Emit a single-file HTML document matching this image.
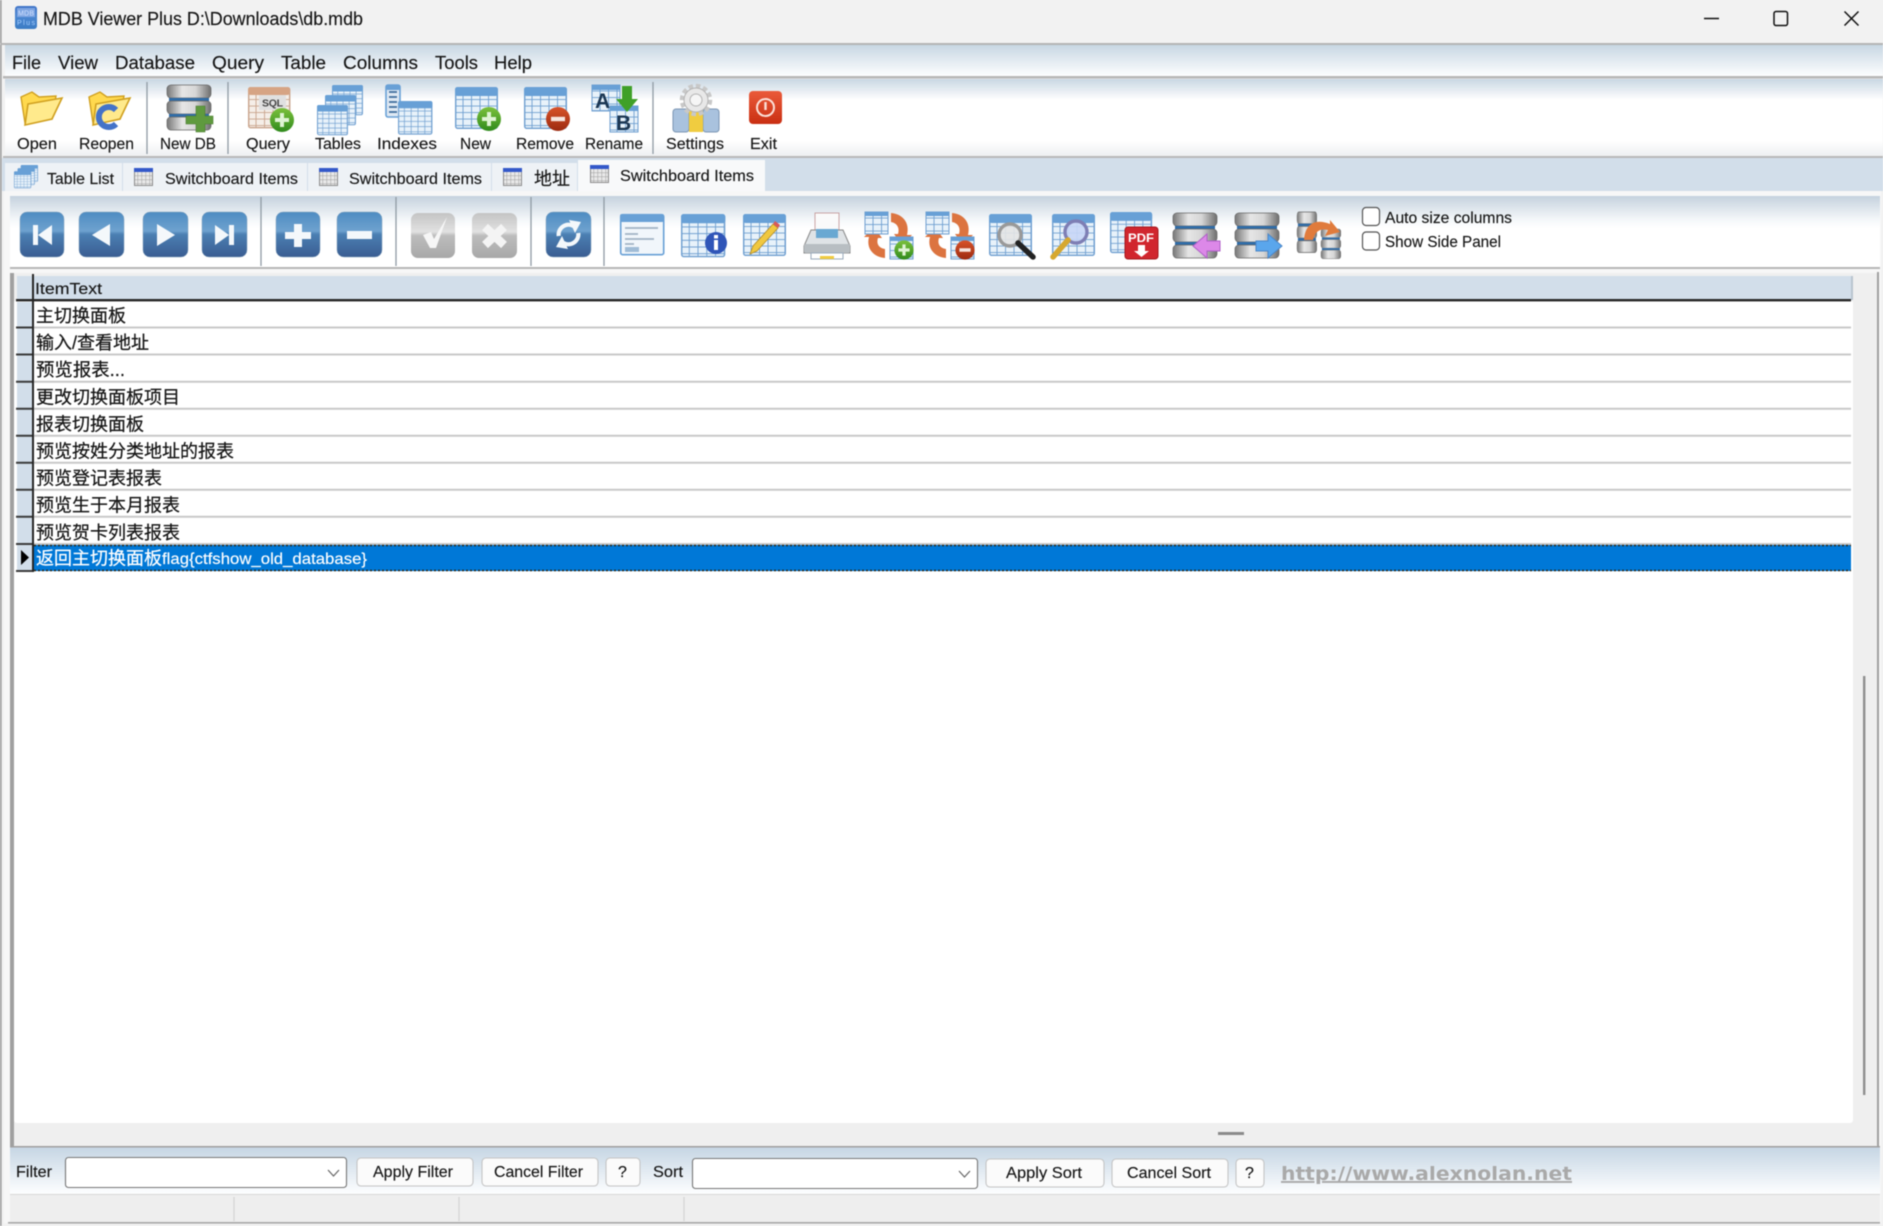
<!DOCTYPE html>
<html><head><meta charset="utf-8"><title>MDB Viewer Plus</title>
<style>
html,body{margin:0;padding:0;background:#f2f2f2;width:1883px;height:1226px;overflow:hidden}
svg{display:block;filter:blur(.45px)}
text{font-family:"Liberation Sans","Noto Sans CJK SC",sans-serif;fill:#161616}
.m{font-size:18px;stroke:#161616;stroke-width:.15px}.t{font-size:16px;stroke:#161616;stroke-width:.15px}.r{font-size:18px;stroke:#161616;stroke-width:.22px}
.w{fill:#fff;stroke:#fff}
</style></head><body>
<svg width="1883" height="1226" viewBox="0 0 1883 1226" xmlns="http://www.w3.org/2000/svg">
<defs>
<linearGradient id="gMenu" x1="0" y1="0" x2="0" y2="1"><stop offset="0" stop-color="#c8d7e3"/><stop offset="1" stop-color="#fdfeff"/></linearGradient>
<linearGradient id="gTool" x1="0" y1="0" x2="0" y2="1"><stop offset="0" stop-color="#c9d7e3"/><stop offset=".27" stop-color="#ffffff"/><stop offset=".8" stop-color="#ffffff"/><stop offset="1" stop-color="#eef0f2"/></linearGradient>
<linearGradient id="gNav" x1="0" y1="0" x2="0" y2="1"><stop offset="0" stop-color="#c5d2de"/><stop offset=".35" stop-color="#f6f9fb"/><stop offset=".45" stop-color="#ffffff"/><stop offset="1" stop-color="#ffffff"/></linearGradient>
<linearGradient id="gBtn" x1="0" y1="0" x2="0" y2="1"><stop offset="0" stop-color="#4f8cc2"/><stop offset=".42" stop-color="#6ea2cf"/><stop offset=".5" stop-color="#4b7fb2"/><stop offset="1" stop-color="#3a5d92"/></linearGradient>
<linearGradient id="gGray" x1="0" y1="0" x2="0" y2="1"><stop offset="0" stop-color="#c4c4c4"/><stop offset=".42" stop-color="#e2e2e2"/><stop offset=".5" stop-color="#bdbdbd"/><stop offset="1" stop-color="#a8a8a8"/></linearGradient>
<linearGradient id="gCyl" x1="0" y1="0" x2="1" y2="0"><stop offset="0" stop-color="#777"/><stop offset=".35" stop-color="#e6e6e6"/><stop offset=".65" stop-color="#d6d6d6"/><stop offset="1" stop-color="#6e6e6e"/></linearGradient>
<linearGradient id="gGreen" x1="0" y1="0" x2="0" y2="1"><stop offset="0" stop-color="#7cc13c"/><stop offset="1" stop-color="#2f8a1c"/></linearGradient>
<linearGradient id="gRed" x1="0" y1="0" x2="0" y2="1"><stop offset="0" stop-color="#d8532a"/><stop offset="1" stop-color="#9c2a10"/></linearGradient>
<linearGradient id="gExit" x1="0" y1="0" x2="0" y2="1"><stop offset="0" stop-color="#ea5a3a"/><stop offset="1" stop-color="#c92f12"/></linearGradient>
<linearGradient id="gFilter" x1="0" y1="0" x2="0" y2="1"><stop offset="0" stop-color="#c6d6e4"/><stop offset="1" stop-color="#fdfeff"/></linearGradient>
<linearGradient id="gIcon" x1="0" y1="0" x2="0" y2="1"><stop offset="0" stop-color="#3f74c8"/><stop offset=".5" stop-color="#4a86d0"/><stop offset="1" stop-color="#3b7cc4"/></linearGradient>
<pattern id="cells" width="8.5" height="6.5" patternUnits="userSpaceOnUse"><rect width="8.5" height="6.5" fill="#e8f2fa"/><path d="M8.5 0V6.5M0 6.5H8.5" stroke="#6f9fd0" stroke-width="1.8"/></pattern>
<pattern id="cellsT" width="8.5" height="6.5" patternUnits="userSpaceOnUse"><rect width="8.5" height="6.5" fill="#f5eee8"/><path d="M8.5 0V6.5M0 6.5H8.5" stroke="#c9a48c" stroke-width="1.8"/></pattern>
<pattern id="cellsG" width="4" height="4" patternUnits="userSpaceOnUse"><rect width="4" height="4" fill="#e8e8e8"/><path d="M4 0V4M0 4H4" stroke="#a0a0a0" stroke-width="1"/></pattern>
<g id="tbl"><rect x=".7" y=".7" width="41.6" height="40.6" rx="2" fill="url(#cells)" stroke="#6f9fd0" stroke-width="1.4"/><rect x="0" y="0" width="43" height="9" rx="2.5" fill="#68a0d6"/></g>
<g id="tab"><rect x=".5" y=".5" width="18" height="17" fill="url(#cellsG)" stroke="#8d8d8d"/><rect x="0" y="0" width="19" height="4" fill="#3358c9"/></g>
<g id="plusG"><circle r="12" fill="url(#gGreen)"/><path d="M-7 0H7M0-7V7" stroke="#dff3d4" stroke-width="4"/></g>
<g id="minusR"><circle r="12" fill="url(#gRed)"/><path d="M-7 0H7" stroke="#f6e6e0" stroke-width="4.4"/></g>
<g id="cyl"><rect x="0" y="0" width="44" height="13" rx="4" fill="url(#gCyl)" stroke="#666" stroke-width=".7"/><rect x="2" y="13" width="40" height="3" fill="#2f6ca8"/><rect x="0" y="16" width="44" height="13" rx="4" fill="url(#gCyl)" stroke="#666" stroke-width=".7"/><rect x="2" y="29" width="40" height="3" fill="#2f6ca8"/><rect x="0" y="32" width="44" height="13" rx="4" fill="url(#gCyl)" stroke="#666" stroke-width=".7"/></g>
<g id="fold"><path d="M2 7 L13 2 L20 7 L37 6 L33 29 L6 33 Z" fill="#ffd94e" stroke="#d0a020" stroke-width="1.4"/><path d="M9 14 L43 8 L33 29 L6 35 Z" fill="#ffea8c" stroke="#d0a020" stroke-width="1.6"/></g>
<g id="swap"><path d="M26 1 C38 2 45 11 42 23 L47 23 L37 33 L29 22 L33 22 C35 16 32 11 26 10 Z" fill="#dc7440"/><path d="M20 46 C8 45 1 36 4 25 L-1 25 L9 15 L17 26 L13 26 C11 32 14 36 20 37 Z" fill="#dc7440"/><rect x="0" y="0" width="23" height="22" fill="url(#cells)" stroke="#6f9fd0"/><rect x="0" y="0" width="23" height="4" fill="#68a0d6"/><rect x="25" y="25" width="23" height="22" fill="url(#cells)" stroke="#6f9fd0"/><rect x="25" y="25" width="23" height="4" fill="#68a0d6"/></g>
</defs>

<!-- window base -->
<rect width="1883" height="1226" fill="#f2f2f2"/>
<rect x="0" y="0" width="1.6" height="1226" fill="#9a9a9a"/>
<rect x="0" y="43" width="1883" height="2" fill="#b4b4b4"/>

<!-- title -->
<g transform="translate(15 6)"><rect width="22" height="23" rx="3" fill="url(#gIcon)"/><rect x="2" y="2" width="18" height="9" fill="#7fa6e2"/><text x="3" y="9.5" style="font-size:7px;fill:#cfe0ff" textLength="16">MDB</text><text x="2" y="19" style="font-size:7px;fill:#a9d0ff" textLength="18">Plus</text></g>
<text x="43" y="25" class="m" textLength="320" lengthAdjust="spacingAndGlyphs">MDB Viewer Plus D:\Downloads\db.mdb</text>
<path d="M1704 18.5H1719" stroke="#111" stroke-width="1.5"/>
<rect x="1774" y="11.5" width="13.5" height="14" rx="2" fill="none" stroke="#111" stroke-width="1.5"/>
<path d="M1844.5 11.5L1858.5 25.5M1858.5 11.5L1844.5 25.5" stroke="#111" stroke-width="1.5"/>

<!-- menu -->
<rect x="5" y="45" width="1878" height="31" fill="url(#gMenu)"/>
<rect x="3" y="76" width="1880" height="2.5" fill="#b7b7b7"/>
<text x="12" y="69" class="m" textLength="29" lengthAdjust="spacingAndGlyphs">File</text>
<text x="58" y="69" class="m" textLength="40" lengthAdjust="spacingAndGlyphs">View</text>
<text x="115" y="69" class="m" textLength="80" lengthAdjust="spacingAndGlyphs">Database</text>
<text x="212" y="69" class="m" textLength="52" lengthAdjust="spacingAndGlyphs">Query</text>
<text x="281" y="69" class="m" textLength="45" lengthAdjust="spacingAndGlyphs">Table</text>
<text x="343" y="69" class="m" textLength="75" lengthAdjust="spacingAndGlyphs">Columns</text>
<text x="435" y="69" class="m" textLength="43" lengthAdjust="spacingAndGlyphs">Tools</text>
<text x="494" y="69" class="m" textLength="38" lengthAdjust="spacingAndGlyphs">Help</text>

<!-- main toolbar -->
<rect x="5" y="79" width="1878" height="77" fill="url(#gTool)"/>
<rect x="3" y="156" width="1880" height="2" fill="#b9b9b9"/>
<path d="M147 82V154M228 82V154M653 82V154" stroke="#8f9aa3" stroke-width="1.3"/>

<use href="#fold" x="19" y="90"/>
<text x="17" y="149" class="t" textLength="40" lengthAdjust="spacingAndGlyphs">Open</text>
<g transform="translate(87 90)"><use href="#fold"/><path d="M29 20 A10 10 0 1 0 29 34" fill="none" stroke="#4473c8" stroke-width="6"/></g>
<text x="79" y="149" class="t" textLength="55" lengthAdjust="spacingAndGlyphs">Reopen</text>
<g transform="translate(167 85)"><use href="#cyl"/><path d="M21 34H31V24H40V34H48V42H40V50H31V42H21Z" fill="#5f9a3e" stroke="#4a7a30" stroke-width=".6" transform="translate(-2 -3)"/></g>
<text x="160" y="149" class="t" textLength="56" lengthAdjust="spacingAndGlyphs">New DB</text>

<g transform="translate(248 87)"><rect x=".7" y=".7" width="41" height="40" rx="2" fill="url(#cellsT)" stroke="#c9a48c" stroke-width="1.4"/><rect width="42" height="8" rx="2.5" fill="#d6a484"/><rect x="11" y="8" width="27" height="15" fill="#e0e0e0"/><text x="14" y="19.5" style="font-size:10.5px;font-weight:bold;fill:#444" textLength="21">SQL</text><use href="#plusG" x="34" y="33"/></g>
<text x="246" y="149" class="t" textLength="44" lengthAdjust="spacingAndGlyphs">Query</text>

<g transform="translate(317 85)"><g transform="translate(15 0) scale(.72)"><use href="#tbl"/></g><g transform="translate(8 10) scale(.72)"><use href="#tbl"/></g><g transform="translate(0 20) scale(.72)"><use href="#tbl"/></g></g>
<text x="315" y="149" class="t" textLength="46" lengthAdjust="spacingAndGlyphs">Tables</text>

<g transform="translate(386 85)"><rect x="0" y="0" width="14" height="32" rx="2" fill="#dfe9f3" stroke="#68a0d6" stroke-width="1.6"/><path d="M3 7H11M3 12H11M3 17H11M3 22H11M3 27H11" stroke="#3d6b9c" stroke-width="1.8"/><rect width="14" height="5" rx="2" fill="#68a0d6"/><g transform="translate(12 16) scale(.8)"><use href="#tbl"/></g></g>
<text x="377" y="149" class="t" textLength="60" lengthAdjust="spacingAndGlyphs">Indexes</text>

<g transform="translate(455 87)"><use href="#tbl"/><use href="#plusG" x="34" y="32"/></g>
<text x="460" y="149" class="t" textLength="31" lengthAdjust="spacingAndGlyphs">New</text>
<g transform="translate(524 87)"><use href="#tbl"/><use href="#minusR" x="34" y="32"/></g>
<text x="516" y="149" class="t" textLength="58" lengthAdjust="spacingAndGlyphs">Remove</text>

<g transform="translate(592 85)"><rect width="28" height="26" fill="url(#cells)" stroke="#6f9fd0"/><rect width="28" height="5" fill="#68a0d6"/><rect x="18" y="21" width="28" height="26" fill="url(#cells)" stroke="#6f9fd0"/><rect x="18" y="21" width="28" height="5" fill="#68a0d6"/><text x="3" y="23" style="font-size:21px;font-weight:bold;fill:#1b3652">A</text><text x="24" y="45" style="font-size:21px;font-weight:bold;fill:#1b3652">B</text><path d="M30 1H40V14H46L35 27L24 14H30Z" fill="#3fa028"/></g>
<text x="585" y="149" class="t" textLength="58" lengthAdjust="spacingAndGlyphs">Rename</text>

<g transform="translate(673 85)"><rect x="0" y="24" width="16" height="23" rx="3" fill="#a9c2de" stroke="#7b96b3"/><rect x="30" y="24" width="16" height="23" rx="3" fill="#a9c2de" stroke="#7b96b3"/><rect x="16" y="26" width="14" height="21" fill="#f0cc40"/><circle cx="23" cy="15" r="14" fill="none" stroke="#c8c8c8" stroke-width="4.5" stroke-dasharray="4.5 2.8"/><circle cx="23" cy="15" r="12" fill="#e8e8e8" stroke="#b4b4b4"/><circle cx="23" cy="15" r="6" fill="#f6f6f6" stroke="#b4b4b4"/></g>
<text x="666" y="149" class="t" textLength="58" lengthAdjust="spacingAndGlyphs">Settings</text>

<g transform="translate(749 91)"><rect width="33" height="33" rx="4" fill="url(#gExit)"/><circle cx="16.5" cy="16.5" r="8.5" fill="none" stroke="#fbe0d8" stroke-width="2"/><path d="M16.5 11V19" stroke="#fbe0d8" stroke-width="2.4"/></g>
<text x="750" y="149" class="t" textLength="27" lengthAdjust="spacingAndGlyphs">Exit</text>

<!-- tabs -->
<rect x="2" y="158" width="1881" height="33" fill="#d2deea"/>
<rect x="5" y="163" width="117" height="28" fill="#eef2f6"/>
<rect x="123" y="163" width="184" height="28" fill="#eef2f6"/>
<rect x="308" y="163" width="183" height="28" fill="#eef2f6"/>
<rect x="492" y="163" width="85" height="28" fill="#eef2f6"/>
<rect x="578" y="160" width="187" height="31" fill="#f8f9fa"/>
<g transform="translate(14 165)"><g transform="scale(.4)"><use href="#tbl" x="17" y="0"/><use href="#tbl" x="9" y="8"/><use href="#tbl" x="0" y="16"/></g></g>
<text x="47" y="184" class="t" textLength="67" lengthAdjust="spacingAndGlyphs">Table List</text>
<use href="#tab" x="134" y="168"/>
<text x="165" y="184" class="t" textLength="133" lengthAdjust="spacingAndGlyphs">Switchboard Items</text>
<use href="#tab" x="319" y="168"/>
<text x="349" y="184" class="t" textLength="133" lengthAdjust="spacingAndGlyphs">Switchboard Items</text>
<use href="#tab" x="503" y="168"/>
<text x="534" y="185" class="m">地址</text>
<use href="#tab" x="590" y="165"/>
<text x="620" y="181" class="t" textLength="134" lengthAdjust="spacingAndGlyphs">Switchboard Items</text>

<!-- panel -->
<rect x="4" y="191" width="1877" height="1032" fill="#f7f7f7"/>
<rect x="10" y="196" width="1870" height="71" fill="url(#gNav)"/>
<rect x="10" y="267" width="1870" height="2" fill="#b6b6b6"/>
<path d="M261 197V266M396 197V266M531 197V266M604 197V266" stroke="#8f9aa3" stroke-width="1.3"/>

<!-- nav buttons -->
<g fill="url(#gBtn)" stroke="#86a3bd" stroke-width=".5">
<rect x="20" y="212" width="44" height="45" rx="7"/><rect x="79" y="212" width="45" height="45" rx="7"/><rect x="143" y="212" width="45" height="45" rx="7"/><rect x="202" y="212" width="45" height="45" rx="7"/><rect x="276" y="212" width="44" height="45" rx="7"/><rect x="337" y="212" width="45" height="45" rx="7"/><rect x="546" y="212" width="45" height="45" rx="7"/>
</g>
<rect x="411" y="213" width="44" height="45" rx="7" fill="url(#gGray)"/>
<rect x="472" y="213" width="45" height="45" rx="7" fill="url(#gGray)"/>
<g fill="#f4f8fb">
<rect x="33" y="225" width="5" height="20"/><path d="M52 225V245L38 235Z"/>
<path d="M110 224V246L92 235Z"/>
<path d="M157 224V246L175 235Z"/>
<path d="M215 225V245L229 235Z"/><rect x="229" y="225" width="5" height="20"/>
<path d="M294 224H302V232H311V239H302V247H294V239H285V232H294Z"/>
<rect x="347" y="231" width="25" height="8"/>
</g>
<path d="M423 235L431 232L434 239L447 217L436 248L430 248Z" fill="#f6f6f6"/>
<path d="M485 227L504 245M504 227L485 245" stroke="#f4f4f4" stroke-width="8.5"/>
<g fill="none" stroke="#f4f8fb" stroke-width="4.2"><path d="M558.7 236 A10 10 0 0 1 573.5 226"/><path d="M578.3 233 A10 10 0 0 1 563.5 243"/></g>
<path d="M569 220L581 222L575 233Z M568 249L556 247L562 236Z" fill="#f4f8fb"/>

<!-- record icons -->
<g transform="translate(620 214)"><rect x=".7" y=".7" width="43" height="40" rx="2" fill="#f1f6fb" stroke="#68a0d6" stroke-width="1.6"/><rect width="44" height="8" rx="2" fill="#68a0d6"/><path d="M5 14H38M5 20H18M5 25H34M5 30H14" stroke="#a0b2c4" stroke-width="1.8"/><rect x="5" y="33" width="14" height="5" fill="#a0bcd6"/></g>
<g transform="translate(681 214)"><g transform="scale(1.03)"><use href="#tbl"/></g><circle cx="35" cy="29" r="11" fill="#2f55b8"/><rect x="33" y="26" width="4" height="10" fill="#fff"/><rect x="33" y="21" width="4" height="3.5" fill="#fff"/></g>
<g transform="translate(743 214)"><use href="#tbl"/><path d="M7 40L10 32L30 10L35 14L14 37Z" fill="#f0c840" stroke="#b08a28" stroke-width=".8"/><path d="M30 10L32 7L37 11L35 14Z" fill="#d85a5a"/></g>
<g transform="translate(803 213)"><rect x="12" y="0" width="24" height="20" fill="#fafafa" stroke="#c09090" stroke-width=".8"/><path d="M8 17H40L47 33V40H1V33Z" fill="#dfe3e6" stroke="#888"/><rect x="13" y="16" width="22" height="9" fill="#69a8d2"/><rect x="1" y="31" width="46" height="9" rx="2" fill="#b8bec2"/><rect x="8" y="40" width="32" height="6" fill="#fff" stroke="#9ab"/><rect x="17" y="43" width="14" height="3" fill="#f0cc40"/></g>
<use href="#swap" x="865" y="212"/><g transform="translate(904 250) scale(.8)"><use href="#plusG"/></g>
<use href="#swap" x="926" y="212"/><g transform="translate(965 250) scale(.8)"><use href="#minusR"/></g>
<g transform="translate(989 214)"><use href="#tbl"/><circle cx="21" cy="21" r="11" fill="#e4e4e4" fill-opacity=".9" stroke="#999" stroke-width="3.4"/><path d="M29 29L44 43" stroke="#222" stroke-width="5.5" stroke-linecap="round"/></g>
<g transform="translate(1052 214)"><use href="#tbl"/><circle cx="24" cy="18" r="11" fill="#c8d6f6" fill-opacity=".9" stroke="#7e7eb4" stroke-width="3.4"/><path d="M16 26L1 43" stroke="#d6a830" stroke-width="5.5" stroke-linecap="round"/></g>
<g transform="translate(1110 212)"><g transform="scale(.98)"><use href="#tbl"/></g><rect x="15" y="15" width="33" height="32" rx="3" fill="#d1262e" stroke="#a4161c"/><text x="18" y="30" style="font-size:12px;font-weight:bold;fill:#fff" textLength="26" lengthAdjust="spacingAndGlyphs">PDF</text><path d="M28 33H35V39H39L31.5 45L24 39H28Z" fill="#fff"/></g>
<use href="#cyl" x="1173" y="213"/>
<path d="M1193 246L1207 234V241H1220V251H1207V258Z" fill="#dc88e8" stroke="#b060c8"/>
<use href="#cyl" x="1235" y="213"/>
<path d="M1282 246L1268 234V241H1256V251H1268V258Z" fill="#5aa6ec" stroke="#4a86c8"/>
<g transform="translate(1297 212)"><g transform="scale(.45 .9)"><use href="#cyl" x="0" y="0"/></g><g transform="translate(24 17) scale(.45 .66)"><use href="#cyl"/></g><path d="M7 28C8 12 18 6 33 12L33 8L43 20L28 24L31 18C22 16 18 20 16 28Z" fill="#e07b3c"/></g>

<!-- checks -->
<rect x="1362.5" y="207.5" width="17" height="18" rx="3.5" fill="#fff" stroke="#555" stroke-width="1.2"/>
<text x="1385" y="223" class="t" textLength="127" lengthAdjust="spacingAndGlyphs">Auto size columns</text>
<rect x="1362.5" y="232" width="17" height="18" rx="3.5" fill="#fff" stroke="#555" stroke-width="1.2"/>
<text x="1385" y="247" class="t" textLength="116" lengthAdjust="spacingAndGlyphs">Show Side Panel</text>

<!-- grid -->
<rect x="10" y="273" width="4" height="874" fill="#a0a0a0"/>
<rect x="1877" y="272" width="2" height="875" fill="#a0a0a0"/>
<rect x="14" y="273" width="1863" height="873" fill="#efefef"/>
<rect x="14" y="300" width="1839" height="823" rx="3" fill="#fff"/>
<rect x="33" y="276" width="1818" height="24" fill="#d2deea"/>
<rect x="17" y="276" width="15" height="24" fill="#d2deea"/>
<rect x="1851" y="276" width="2" height="24" fill="#b9c4cf"/>
<rect x="1853" y="276" width="24" height="24" fill="#efefef"/>
<rect x="17" y="302" width="15" height="269" fill="#d2deea"/>
<g stroke="#c9c9c9" stroke-width="2">
<path d="M33 327.5H1851M33 354.5H1851M33 381.7H1851M33 408.8H1851M33 435.8H1851M33 462.8H1851M33 489.8H1851M33 516.8H1851M33 544H1851"/>
</g>
<g stroke="#3a3a3a" stroke-width="2">
<path d="M16 327.5H33M16 354.5H33M16 381.7H33M16 408.8H33M16 435.8H33M16 462.8H33M16 489.8H33M16 516.8H33M16 544H33M16 571H33"/>
</g>
<rect x="16" y="299" width="1835" height="2.4" fill="#262626"/>
<rect x="32" y="274" width="2" height="298" fill="#262626"/>
<rect x="34" y="545" width="1817" height="26" fill="#0078d7"/>
<path d="M34 545.5H1851M34 570.5H1851" fill="none" stroke="#2c2410" stroke-width="1.6" stroke-dasharray="2 2"/>
<path d="M21 550V565L29 557.5Z" fill="#000"/>

<text x="35" y="294" class="t" textLength="67" lengthAdjust="spacingAndGlyphs">ItemText</text>
<text x="36" y="322" class="r">主切换面板</text>
<text x="36" y="349" class="r" textLength="113" lengthAdjust="spacingAndGlyphs">输入/查看地址</text>
<text x="36" y="376.2" class="r" textLength="89" lengthAdjust="spacingAndGlyphs">预览报表...</text>
<text x="36" y="403.3" class="r">更改切换面板项目</text>
<text x="36" y="430.4" class="r">报表切换面板</text>
<text x="36" y="457.5" class="r">预览按姓分类地址的报表</text>
<text x="36" y="484.6" class="r">预览登记表报表</text>
<text x="36" y="511.7" class="r">预览生于本月报表</text>
<text x="36" y="538.8" class="r">预览贺卡列表报表</text>
<text x="36" y="564.5" class="r w">返回主切换面板</text>
<text x="162" y="564" class="t w" textLength="205" lengthAdjust="spacingAndGlyphs">flag{ctfshow_old_database}</text>

<!-- scroll -->
<rect x="1863" y="676" width="2.4" height="419" fill="#8e8e8e"/>
<rect x="1218" y="1132" width="26" height="3" fill="#8a8a8a"/>
<rect x="10" y="1146" width="1870" height="1.6" fill="#a0a0a0"/>

<!-- filter bar -->
<rect x="10" y="1147.5" width="1870" height="46" fill="url(#gFilter)"/>
<rect x="10" y="1194" width="1870" height="1.4" fill="#d8d8d8"/>
<rect x="10" y="1195" width="1870" height="27" fill="#eeeeee"/>
<rect x="8" y="1222" width="1872" height="1.6" fill="#a8a8a8"/>
<path d="M234 1197V1221M459 1197V1221M684 1197V1221" stroke="#d2d2d2" stroke-width="1.2"/>

<text x="16" y="1177" class="t" textLength="36" lengthAdjust="spacingAndGlyphs">Filter</text>
<rect x="65.5" y="1157.5" width="281" height="30" rx="3" fill="#fff" stroke="#777" stroke-width="1.1"/>
<path d="M328 1170L333.5 1176L339 1170" fill="none" stroke="#666" stroke-width="1.2"/>
<g fill="#fbfbfb" stroke="#c4c4c4" stroke-width="1.1">
<rect x="357" y="1158" width="116" height="28" rx="4"/><rect x="482" y="1158" width="116" height="28" rx="4"/><rect x="606" y="1158" width="34" height="28" rx="4"/>
<rect x="986" y="1159" width="118" height="28" rx="4"/><rect x="1112" y="1159" width="116" height="28" rx="4"/><rect x="1236" y="1159" width="28" height="28" rx="4"/>
</g>
<text x="373" y="1177" class="t" textLength="80" lengthAdjust="spacingAndGlyphs">Apply Filter</text>
<text x="494" y="1177" class="t" textLength="89" lengthAdjust="spacingAndGlyphs">Cancel Filter</text>
<text x="618" y="1177" class="t">?</text>
<text x="653" y="1177" class="t" textLength="30" lengthAdjust="spacingAndGlyphs">Sort</text>
<rect x="692.5" y="1158.5" width="285" height="30" rx="3" fill="#fff" stroke="#777" stroke-width="1.1"/>
<path d="M959 1171L964.5 1177L970 1171" fill="none" stroke="#666" stroke-width="1.2"/>
<text x="1006" y="1178" class="t" textLength="76" lengthAdjust="spacingAndGlyphs">Apply Sort</text>
<text x="1127" y="1178" class="t" textLength="84" lengthAdjust="spacingAndGlyphs">Cancel Sort</text>
<text x="1245" y="1178" class="t">?</text>
<text x="1281" y="1180" style="font-family:'DejaVu Sans',sans-serif;font-size:19px;font-weight:bold;fill:#a9a9a9;text-decoration:underline" textLength="291" lengthAdjust="spacingAndGlyphs">http://www.alexnolan.net</text>
</svg>
</body></html>
